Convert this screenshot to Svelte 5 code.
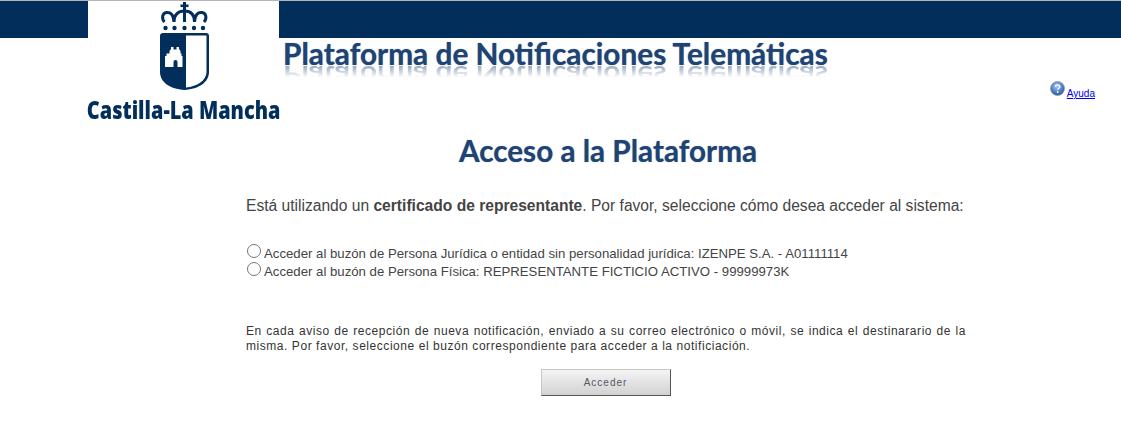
<script>
  let selected = $state("");

  const buzones = [
    { id: "juridica", label: "Acceder al buzón de Persona Jurídica o entidad sin personalidad jurídica: IZENPE S.A. - A01111114" },
    { id: "fisica", label: "Acceder al buzón de Persona Física: REPRESENTANTE FICTICIO ACTIVO - 99999973K" }
  ];
</script>

<header class="top">
  <div class="logo">
    <svg class="escudo" width="50" height="90" viewBox="0 0 50 90">
      <g fill="#012e5b">
        <rect x="24" y="1" width="3" height="8" />
        <rect x="21.500" y="3.500" width="8" height="2.600" />
        <circle cx="6.500" cy="27" r="2.200" />
        <circle cx="15.500" cy="27" r="2.200" />
        <circle cx="25.500" cy="27" r="2.200" />
        <circle cx="35" cy="27" r="2.200" />
        <circle cx="44" cy="27" r="2.200" />
        <path fill-rule="evenodd" d="M4 32h43a3 3 0 0 1 3 3v36c0 10-10 17-24.500 18C11 88 1 81 1 71V35a3 3 0 0 1 3-3zM27 34.500v52c11-1 20.500-7 20.500-15.500V34.500z" />
      </g>
      <path d="M5.500 21c-3-3-2.500-9 2-9.500 4-.5 7 2 7.500 9.500M15 21c0-7 4-11 10.500-11S35.500 14 35.500 21M35.500 21c.5-7.500 3.500-10 7.500-9.500 4.500.5 5 6.500 2 9.500M25.500 10v11" fill="none" stroke="#012e5b" stroke-width="3" />
      <path fill="#fff" d="M6 66V55h1.500v-2.500h3V50l1.500-2v-2h2.500v2.500h3V46h2.500v2l1.500 2v2.500h1V55h1v11h-5v-5a2 2 0 0 0-4 0v5z" />
    </svg>
    <span class="marca">Castilla-La Mancha</span>
  </div>
  <div class="titulo">
    <h1>Plataforma de Notificaciones Telemáticas</h1>
    <div class="reflejo" aria-hidden="true">Plataforma de Notificaciones Telemáticas</div>
  </div>
  <a class="ayuda" href="#ayuda">
    <svg width="15" height="15" viewBox="0 0 15 15">
      <defs>
        <radialGradient id="bola" cx="45%" cy="35%" r="70%">
          <stop offset="0" stop-color="#a9c8f0" />
          <stop offset="0.6" stop-color="#4b7fc4" />
          <stop offset="1" stop-color="#2a4f8f" />
        </radialGradient>
      </defs>
      <circle cx="7.500" cy="7.500" r="7" fill="url(#bola)" stroke="#8a94a6" stroke-width="0.700" />
      <path d="M5.300 5.800c.2-1.300 1.100-1.900 2.300-1.900 1.300 0 2.200.8 2.200 1.800 0 1.500-2.100 1.500-2.100 3" fill="none" stroke="#fff" stroke-width="1.400" />
      <circle cx="7.700" cy="11" r="0.900" fill="#fff" />
    </svg>
    <span>Ayuda</span>
  </a>
</header>

<main>
  <section class="contenido">
    <h2>Acceso a la Plataforma</h2>
    <p class="aviso">Está utilizando un <strong>certificado de representante</strong>. Por favor, seleccione cómo desea acceder al sistema:</p>
    <div class="opciones">
      {#each buzones as b}
        <label>
          <input type="radio" name="buzon" value={b.id} bind:group={selected} />
          <span>{b.label}</span>
        </label>
      {/each}
    </div>
    <p class="nota">En cada aviso de recepción de nueva notificación, enviado a su correo electrónico o móvil, se indica el destinarario de la misma. Por favor, seleccione el buzón correspondiente para acceder a la notificiación.</p>
    <div class="acciones">
      <button type="button">Acceder</button>
    </div>
  </section>
</main>

<style>
  :global(body) {
    background: #fff;
    font-family: "Liberation Sans", Arial, sans-serif;
    color: #333;
  }

  .top {
    display: flex;
    align-items: flex-start;
    height: 125px;
    padding-left: 88px;
    background: linear-gradient(#b5b5b5 0 1px, #012e5b 1px 38px, #fff 38px) no-repeat;
  }

  .logo {
    display: flex;
    flex-direction: column;
    align-items: center;
    width: 191px;
    height: 125px;
    box-sizing: border-box;
    background: #fff;
    border-top: 1px solid #b5b5b5;
  }

  .escudo {
    display: block;
    flex: none;
  }

  .marca {
    margin-top: 6px;
    white-space: nowrap;
    font-family: "Open Sans", sans-serif;
    font-weight: 800;
    font-size: 24px;
    line-height: 26px;
    color: #012e5b;
    transform: scaleX(0.83);
  }

  .titulo {
    margin: 38px 0 0 4px;
    width: 560px;
    height: 50px;
    overflow: hidden;
    font-family: Lato, sans-serif;
    font-weight: 700;
    font-size: 29.800px;
    color: #1f4373;
    white-space: nowrap;
  }

  h1 {
    margin: 0;
    font: inherit;
    line-height: 32px;
    text-shadow: 0 0 1px rgba(31, 67, 115, 0.7);
  }

  .reflejo {
    line-height: 32px;
    margin-top: -11px;
    transform: scaleY(-0.8);
    opacity: 0.6;
    filter: blur(0.6px);
    -webkit-mask-image: linear-gradient(transparent 40%, #000);
    mask-image: linear-gradient(transparent 40%, #000);
  }

  .ayuda {
    display: flex;
    align-items: flex-start;
    margin: 81px 26px 0 auto;
    font-size: 10px;
    color: #00e;
  }

  .ayuda span {
    margin: 7px 0 0 2px;
    text-decoration: underline;
    line-height: 11px;
  }

  .contenido {
    width: 720px;
    margin-left: 246px;
  }

  h2 {
    margin: 8px 0 0;
    padding-left: 4px;
    text-align: center;
    font-family: Lato, sans-serif;
    font-weight: 700;
    font-size: 29.700px;
    line-height: 36px;
    color: #1f4373;
    text-shadow: 0 0 1px rgba(31, 67, 115, 0.6);
  }

  .aviso {
    margin: 28px 0 0;
    font-size: 15.600px;
    line-height: 18px;
    white-space: nowrap;
    color: #444;
  }

  .opciones {
    margin-top: 29px;
    display: flex;
    flex-direction: column;
  }

  label {
    display: flex;
    align-items: center;
    height: 18px;
    font-size: 13.200px;
    color: #444;
  }

  input {
    width: 14px;
    height: 14px;
    margin: -4px 3px 0 1px;
  }

  .nota {
    margin: 44px 0 0;
    font-size: 12px;
    line-height: 15px;
    letter-spacing: 0.55px;
    text-align: justify;
    color: #333;
  }

  .acciones {
    display: flex;
    justify-content: center;
    margin-top: 15px;
    padding-right: 1px;
  }

  button {
    width: 130px;
    height: 27px;
    padding: 0;
    font-family: inherit;
    font-size: 10px;
    letter-spacing: 1px;
    color: #556;
    background: linear-gradient(#f4f4f4, #d2d2d2);
    border: 1px solid #c8c8c8;
    border-right-color: #555;
    border-bottom-color: #555;
  }
</style>
